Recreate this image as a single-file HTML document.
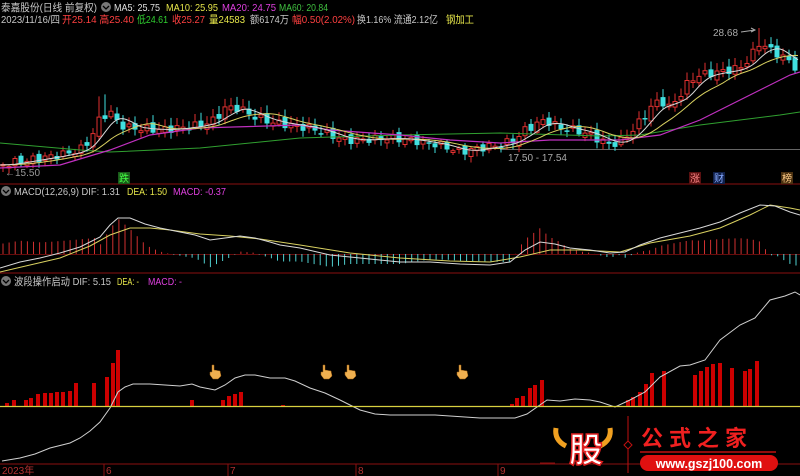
<!DOCTYPE html>
<html><head><meta charset="utf-8"><style>
html,body{margin:0;padding:0;background:#000;width:800px;height:476px;overflow:hidden}
svg{display:block}
text{font-family:"Liberation Sans","Noto Sans CJK SC",sans-serif}
</style></head><body>
<svg id="s" width="800" height="476" xmlns="http://www.w3.org/2000/svg">
<rect width="800" height="476" fill="#000"/>
<g font-size="10.5" lengthAdjust="spacingAndGlyphs">
<text x="1" y="11" fill="#c8c8c8" textLength="96" lengthAdjust="spacingAndGlyphs">泰嘉股份(日线 前复权)</text>
<circle cx="106" cy="7" r="5" fill="#777"/><path d="M103 6l3 3 3-3" stroke="#000" fill="none" stroke-width="1.3"/>
<text x="114" y="11" fill="#e0e0e0" textLength="46" lengthAdjust="spacingAndGlyphs">MA5: 25.75</text>
<text x="166" y="11" fill="#e6e64a" textLength="52" lengthAdjust="spacingAndGlyphs">MA10: 25.95</text>
<text x="222" y="11" fill="#e040e0" textLength="54" lengthAdjust="spacingAndGlyphs">MA20: 24.75</text>
<text x="279" y="11" fill="#40c040" textLength="49" lengthAdjust="spacingAndGlyphs">MA60: 20.84</text>
<text x="1" y="23" fill="#c8c8c8" textLength="59" lengthAdjust="spacingAndGlyphs">2023/11/16/四</text>
<text x="62" y="23" fill="#ff4040" textLength="72" lengthAdjust="spacingAndGlyphs">开25.14 高25.40</text>
<text x="137" y="23" fill="#30d030" textLength="31" lengthAdjust="spacingAndGlyphs">低24.61</text>
<text x="172" y="23" fill="#ff4040" textLength="33" lengthAdjust="spacingAndGlyphs">收25.27</text>
<text x="209" y="23" fill="#e6e64a" textLength="36" lengthAdjust="spacingAndGlyphs">量24583</text>
<text x="250" y="23" fill="#c8c8c8" textLength="39" lengthAdjust="spacingAndGlyphs">额6174万</text>
<text x="292" y="23" fill="#ff4040" textLength="63" lengthAdjust="spacingAndGlyphs">幅0.50(2.02%)</text>
<text x="357" y="23" fill="#c8c8c8" textLength="81" lengthAdjust="spacingAndGlyphs">换1.16% 流通2.12亿</text>
<text x="446" y="23" fill="#e6e64a" textLength="28" lengthAdjust="spacingAndGlyphs">钢加工</text>
</g>
<line x1="0" y1="184" x2="800" y2="184" stroke="#8a1010"/>
<line x1="0" y1="273" x2="800" y2="273" stroke="#8a1010"/>
<line x1="500" y1="149.5" x2="800" y2="149.5" stroke="#888" stroke-width="0.8"/>
<g id="main"></g>
<text x="5" y="176" fill="#999" font-size="10">←15.50</text>
<text x="508" y="161" fill="#aaa" font-size="10">17.50 - 17.54</text>
<text x="713" y="36" fill="#aaa" font-size="10">28.68</text>
<path d="M741 32 L755 30" stroke="#aaa" fill="none"/><path d="M751 28l4 2-4 2" stroke="#aaa" fill="none"/>
<rect x="118" y="172" width="12" height="12" fill="#1a5a1a"/><text x="119" y="182" fill="#4f4" font-size="10">跌</text>
<rect x="689" y="172" width="12" height="12" fill="#5a1010"/><text x="690" y="182" fill="#f88" font-size="10">涨</text>
<rect x="713" y="172" width="12" height="12" fill="#10204a"/><text x="714" y="182" fill="#8af" font-size="10">财</text>
<rect x="781" y="172" width="12" height="12" fill="#4a3010"/><text x="782" y="182" fill="#fc8" font-size="10">榜</text>
<g font-size="10.5">
<circle cx="6" cy="191" r="5" fill="#777"/><path d="M3 190l3 3 3-3" stroke="#000" fill="none" stroke-width="1.3"/>
<text x="14" y="195" fill="#c8c8c8" textLength="106" lengthAdjust="spacingAndGlyphs">MACD(12,26,9) DIF: 1.31</text>
<text x="127" y="195" fill="#e6e64a" textLength="40" lengthAdjust="spacingAndGlyphs">DEA: 1.50</text>
<text x="173" y="195" fill="#e040e0" textLength="53" lengthAdjust="spacingAndGlyphs">MACD: -0.37</text>
<circle cx="6" cy="281" r="5" fill="#777"/><path d="M3 280l3 3 3-3" stroke="#000" fill="none" stroke-width="1.3"/>
<text x="14" y="285" fill="#c8c8c8" textLength="97" lengthAdjust="spacingAndGlyphs">波段操作启动 DIF: 5.15</text>
<text x="117" y="285" fill="#e6e64a" textLength="22" lengthAdjust="spacingAndGlyphs">DEA: -</text>
<text x="148" y="285" fill="#e040e0" textLength="34" lengthAdjust="spacingAndGlyphs">MACD: -</text>
</g>
<line x1="0" y1="254.5" x2="800" y2="254.5" stroke="#8a1010" stroke-width="0.8"/>
<g id="macd"></g>
<g id="botg"></g>
<line x1="0" y1="406.5" x2="800" y2="406.5" stroke="#d8d040" stroke-width="1.2"/>
<line x1="0" y1="464" x2="800" y2="464" stroke="#8a1010"/>
<g stroke="#8a1010"><line x1="104" y1="464" x2="104" y2="476"/><line x1="228" y1="464" x2="228" y2="476"/><line x1="356" y1="464" x2="356" y2="476"/><line x1="498" y1="464" x2="498" y2="476"/></g>
<g fill="#b03030" font-size="10"><text x="2" y="474">2023年</text><text x="106" y="474">6</text><text x="230" y="474">7</text><text x="358" y="474">8</text><text x="500" y="474">9</text></g>
<g id="hands"></g>
<path d="M556 428 q-2 12 10 18 M610 428 q2 12 -10 18" stroke="#f0a020" stroke-width="5" fill="none"/>
<text x="569" y="462" fill="#fff" stroke="#e02020" stroke-width="1.5" font-size="34" font-weight="bold" font-family="Noto Sans CJK SC,sans-serif">股</text>
<line x1="628" y1="416" x2="628" y2="473" stroke="#c01010"/>
<path d="M628 441 l4 4 -4 4 -4 -4z" stroke="#c01010" fill="#000"/>
<line x1="540" y1="463" x2="555" y2="463" stroke="#8a1010"/>
<text x="641" y="446" fill="#f02020" font-size="22" font-weight="bold" letter-spacing="6" font-family="Noto Serif CJK SC,serif">公式之家</text>
<line x1="640" y1="452" x2="776" y2="452" stroke="#c01010" stroke-width="1.5"/>
<rect x="640" y="455" width="138" height="16" rx="8" fill="#e01010"/>
<text x="709" y="468" fill="#fff" font-size="12.5" font-weight="bold" text-anchor="middle">www.gszj100.com</text>
</svg>
<script>
(function(){
var NS="http://www.w3.org/2000/svg";
function el(p,t,a){var e=document.createElementNS(NS,t);for(var k in a)e.setAttribute(k,a[k]);p.appendChild(e);return e}
function interp(pts,x){for(var j=0;j<pts.length-1;j++){if(x<=pts[j+1][0]){var a=pts[j],b=pts[j+1];return a[1]+(b[1]-a[1])*(x-a[0])/(b[0]-a[0]);}}return pts[pts.length-1][1];}
function poly(g,pts,c,w){el(g,"polyline",{points:pts.map(function(p){return p[0].toFixed(1)+","+p[1].toFixed(1)}).join(" "),fill:"none",stroke:c,"stroke-width":w||1});}
var main=document.getElementById("main");
var cl=[[0,165],[30,160],[60,155],[80,150],[90,140],[100,118],[110,112],[120,125],[130,128],[160,130],[180,128],[200,125],[215,120],[225,108],[240,108],[250,115],[270,122],[290,125],[310,128],[330,135],[345,140],[360,140],[390,138],[410,140],[440,145],[460,152],[480,148],[500,145],[515,140],[525,130],[535,125],[545,120],[560,128],[575,130],[590,135],[610,145],[620,142],[635,128],[650,108],[660,100],[670,108],[680,95],[690,80],[700,75],[720,72],[740,68],[750,58],[760,42],[770,50],[780,55],[790,62],[796,68]];
var ma60=[[0,143],[80,150],[110,152],[200,148],[300,138],[400,135],[500,133],[600,136],[640,135],[700,125],[780,115],[800,112]];
var ma20=[[0,168],[60,165],[110,150],[150,135],[200,128],[300,125],[330,130],[400,135],[450,140],[500,143],[550,140],[620,140],[660,135],[700,120],[750,95],[790,75],[800,72]];
function smooth(src,n){var o=[];for(var xx=0;xx<=800;xx+=3){var s=0,c=0;for(var k=-n;k<=0;k+=3){s+=interp(src,Math.max(0,xx+k));c++;}o.push([xx,s/c]);}return o;}
var ma5=smooth(cl,24),ma10=smooth(cl,54);
var prevC=165;
for(var i=0;i<133;i++){var cx=3+i*6;var cc=interp(cl,cx)+Math.sin(i*2.3)*4;var oo=prevC+Math.sin(i*1.7)*3;
var isUp=cc<oo;var bT=Math.min(oo,cc),bB=Math.max(oo,cc);if(bB-bT<1.5)bB=bT+1.5;
var hi=bT-2-Math.abs(Math.sin(i*3.1))*6,lo=bB+2+Math.abs(Math.cos(i*2.7))*4;
if(i==16||i==17){hi-=15}if(i==126){hi=28}
var col=isUp?"#e03030":"#40e0e0";
el(main,"line",{x1:cx,y1:hi.toFixed(1),x2:cx,y2:lo.toFixed(1),stroke:col});
if(isUp)el(main,"rect",{x:cx-2,y:bT.toFixed(1),width:4,height:(bB-bT).toFixed(1),fill:"#000",stroke:col});
else el(main,"rect",{x:cx-2.5,y:bT.toFixed(1),width:5,height:(bB-bT).toFixed(1),fill:col});
prevC=cc;}
poly(main,ma60,"#30a030");poly(main,ma20,"#c030c0",1.2);poly(main,ma10,"#d8d060");poly(main,ma5,"#d8d8d8");
var macd=document.getElementById("macd");
var dif=[[0,268],[20,262],[40,258],[60,253],[80,247],[100,237],[110,225],[118,218],[130,218],[145,224],[160,228],[180,232],[195,235],[210,240],[225,238],[240,236],[255,238],[270,242],[280,245],[300,248],[330,255],[360,258],[400,262],[430,262],[460,264],[490,265],[510,262],[525,250],[540,242],[555,244],[570,248],[590,250],[610,253],[625,252],[640,245],[660,238],[680,233],[700,228],[720,222],[740,213],[760,205],[775,206],[790,212],[800,215]];
var dea=[[0,272],[30,265],[60,258],[90,246],[110,235],[130,228],[150,228],[170,230],[200,234],[230,236],[260,239],[300,245],[350,253],[400,258],[450,261],[490,262],[520,257],[550,250],[580,250],[620,252],[650,243],[690,236],[720,228],[750,215],[770,205],[790,208],[800,210]];
for(var mx=3;mx<800;mx+=6.1){var d=(interp(dea,mx)-interp(dif,mx))*2.5;if(mx<100)d=Math.max(d,8+mx/12);
el(macd,"line",{x1:mx.toFixed(1),y1:254,x2:mx.toFixed(1),y2:(254-d).toFixed(1),stroke:d>0?"#d03030":"#50d0d0"});}
poly(macd,dea,"#d8d060");poly(macd,dif,"#d8d8d8");
var botg=document.getElementById("botg");
var bars=[[7,403],[14,400],[26,400],[31,398],[38,394],[45,393],[51,393],[57,392],[63,392],[70,391],[76,383],[94,383],[107,377],[113,363],[118,350],[192,400],[223,400],[229,396],[235,394],[241,392],[283,405],[512,404],[517,398],[523,396],[530,388],[535,385],[542,380],[628,400],[633,397],[640,392],[646,384],[652,373],[664,371],[695,375],[701,371],[707,367],[713,364],[720,363],[732,368],[745,371],[750,369],[757,361]];
bars.forEach(function(b){el(botg,"rect",{x:b[0]-2,y:b[1],width:4,height:406-b[1],fill:"#cc0000"})});
var wl=[[2,461],[20,458],[35,454],[50,448],[70,443],[80,438],[90,431],[100,422],[110,408],[118,392],[125,387],[133,384],[150,384],[165,385],[180,386],[192,384],[200,387],[215,390],[225,385],[235,378],[245,375],[255,375],[270,378],[285,378],[295,381],[310,388],[325,393],[340,400],[350,405],[360,410],[375,414],[390,415],[435,415],[480,418],[515,418],[527,414],[547,400],[560,401],[575,399],[590,400],[600,402],[615,407],[630,400],[645,392],[660,377],[680,366],[690,365],[705,360],[720,340],[740,325],[755,318],[770,300],[785,296],[795,292],[800,295]];
poly(botg,wl,"#d0d0d0");
var hands=document.getElementById("hands");
[[215,370],[326,370],[350,370],[462,370]].forEach(function(h){
el(hands,"path",{d:"M"+(h[0]-3)+" "+(h[1]-5)+" l2 0 0 5 6 1 1 5 -3 3 -5 0 -3 -4 0 -3 2 0z",fill:"#f0b050",stroke:"#a06010","stroke-width":0.5});});
})();
</script>
</body></html>
